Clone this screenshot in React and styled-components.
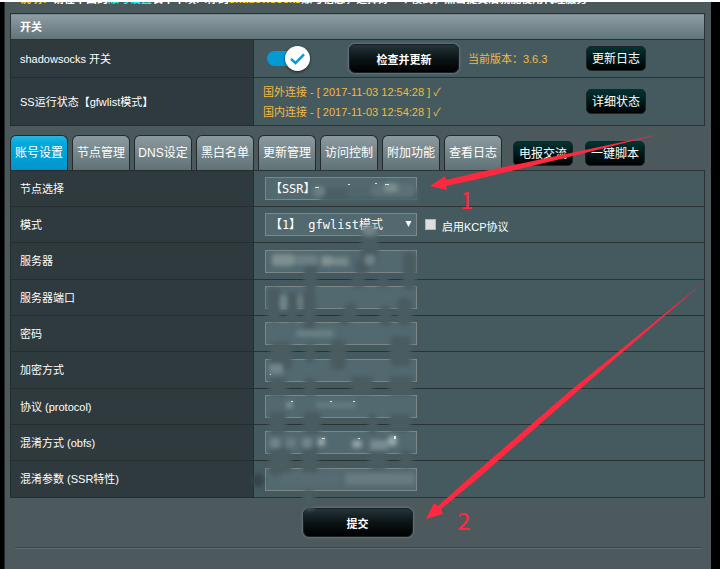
import React, { useState } from "react";
import styled, { createGlobalStyle, css } from "styled-components";

const GlobalStyle = createGlobalStyle`
  * { box-sizing: border-box; }
  html { height: 100%; }
  body, #root { height: 100%; }
  body {
    margin: 0;
    background: #000;
    color: #fff;
    font-family: "Liberation Sans", "Noto Sans CJK SC", sans-serif;
    font-size: 11px;
    line-height: 20px;
  }
  button, input, select { font: inherit; color: inherit; margin: 0; }
`;

const Page = styled.div`
  position: relative;
  min-height: 100%;
  display: flex;
  border-top: 2px solid #fff;
  background: #000;
  padding: 0 9px 0 4px;
`;

const Panel = styled.main`
  flex: 1;
  min-width: 0;
  background: linear-gradient(#4b595c, #4d595d);
  border-left: 1px solid #23292b;
  padding: 0 6px 0 5px;
`;

const Intro = styled.p`
  display: flex;
  align-items: flex-end;
  height: 2px;
  margin: 0 0 9px;
  padding-left: 10px;
  overflow: hidden;
  white-space: nowrap;
  line-height: 9px;
  font-weight: 700;
`;

const Accent = styled.span`
  color: ${(p) => p.$color};
`;

const Table = styled.table`
  width: 100%;
  table-layout: fixed;
  border-collapse: collapse;
  border: 1px solid #2b3234;
`;

const LabelCol = styled.col`
  width: 35%;
`;

const Head = styled.th`
  height: 26px;
  padding: 0 9px;
  text-align: left;
  font-weight: 700;
  background: linear-gradient(#8f9ea3, #5f7378);
  border: 1px solid #2b3234;
`;

const Row = styled.tr`
  height: ${(p) => p.$height || 36}px;
  ${(p) => !p.$height && css`
    &:nth-child(3n) { height: 37px; }
  `}
`;

const Name = styled.th`
  padding: 0 9px;
  text-align: left;
  font-weight: 400;
  background: #2f3a3e;
  border: 1px solid #272d2f;
`;

const Value = styled.td`
  padding: 0 9px;
  background: #445a5f;
  border: 1px solid #2b3234;
`;

const Line = styled.div`
  display: flex;
  align-items: center;
  padding-right: 49px;
`;

const Field = styled.div`
  display: flex;
  align-items: center;
  padding-left: 2px;
`;

const Push = styled.div`
  margin-left: auto;
  display: flex;
`;

const Version = styled.span`
  margin-left: 9px;
  white-space: nowrap;
  color: #f4b93f;
`;

const StatusList = styled.div`
  color: #f4b93f;
`;

const Switch = styled.label`
  position: relative;
  width: 42px;
  height: 25px;
  margin: 0 40px 0 4px;
  display: flex;
  align-items: center;
  input { position: absolute; opacity: 0; inset: 0; }
`;

const Track = styled.span`
  width: 36px;
  height: 15px;
  border-radius: 8px;
  background: ${(p) => (p.$on ? "#039bd3" : "#777")};
`;

const Thumb = styled.span`
  position: absolute;
  top: 0;
  left: ${(p) => (p.$on ? 18 : 0)}px;
  width: 25px;
  height: 25px;
  border-radius: 50%;
  background: #fff;
  box-shadow: 0 1px 3px rgba(0, 0, 0, 0.6);
  display: grid;
  place-items: center;
`;

const MainButton = styled.button`
  width: 110px;
  height: 29px;
  padding: 2px 0 0;
  border: 1px solid #182023;
  border-radius: 6px;
  background: linear-gradient(#233539, #0c1416 50%, #000);
  box-shadow: 0 0 2px 1px #65757a;
  font-weight: 700;
`;

const Pill = styled.button`
  width: 60px;
  height: 25px;
  padding: 0;
  border: 1px solid #1b2526;
  border-radius: 5px;
  background: linear-gradient(#003333, #000);
  font-size: 12px;
`;

const Tabs = styled.nav`
  display: flex;
  align-items: flex-end;
  gap: 4px;
  margin-top: 9px;
  height: 35px;
`;

const Tab = styled.button`
  width: 58px;
  height: 35px;
  padding: 0;
  white-space: nowrap;
  border: 1px solid #222a2c;
  border-bottom: 0;
  border-radius: 6px 6px 0 0;
  background: ${(p) =>
    p.$active
      ? "linear-gradient(#2fb4dc, #00abdc 20%, #0094cc)"
      : "linear-gradient(#8b9a9f, #5f7276)"};
  font-size: 12px;
`;

const TabActions = styled.div`
  display: flex;
  gap: 12px;
  margin-left: 7px;
  height: 29px;
`;

const boxStyle = css`
  width: 152px;
  height: 23px;
  padding: 0 4px;
  border: 1px solid #7d8788;
  border-radius: 0;
  background: #526970;
  font-family: "DejaVu Sans Mono", "Noto Sans CJK SC", monospace;
  font-size: 12px;
  outline: none;
`;

const TextBox = styled.input`${boxStyle}`;
const Choice = styled.select`
  ${boxStyle}
  appearance: none;
`;

const ChoiceWrap = styled.span`
  position: relative;
  display: flex;
`;

const Caret = styled.svg`
  position: absolute;
  right: 5px;
  top: 8px;
  pointer-events: none;
`;

const CheckLabel = styled.label`
  display: flex;
  align-items: center;
  gap: 6px;
  margin-left: 8px;
  padding-top: 4px;
`;

const CheckBox = styled.input`
  appearance: none;
  width: 11px;
  height: 11px;
  margin-bottom: 4px;
  border: 1px solid #b5b5b5;
  background: #dedede;
  &:checked { background: #039bd3; }
`;

const Submit = styled.div`
  display: flex;
  justify-content: center;
  margin-top: 10px;
`;

const Divider = styled.hr`
  margin: 10px 3px 0 5px;
  border: 0;
  border-top: 1px solid #39464a;
  border-bottom: 1px solid #5c6d72;
`;

const Overlay = styled.svg`
  position: absolute;
  left: 0;
  top: -2px;
  pointer-events: none;
`;

const fields = [
  { id: "server", label: "服务器", kind: "text" },
  { id: "port", label: "服务器端口", kind: "text" },
  { id: "password", label: "密码", kind: "password" },
  { id: "method", label: "加密方式", kind: "select" },
  { id: "protocol", label: "协议 (protocol)", kind: "select" },
  { id: "obfs", label: "混淆方式 (obfs)", kind: "select" },
  { id: "param", label: "混淆参数 (SSR特性)", kind: "text" },
];

const tabs = ["账号设置", "节点管理", "DNS设定", "黑白名单", "更新管理", "访问控制", "附加功能", "查看日志"];

// x, y, width, height of each redaction stroke
const darkStrokes = [
  [361, 232, 17, 34], [304, 262, 13, 28], [355, 260, 14, 14], [403, 252, 13, 38],
  [351, 276, 14, 12], [377, 276, 12, 12], [267, 288, 14, 34], [286, 292, 12, 30],
  [303, 290, 13, 34], [344, 303, 13, 18], [379, 306, 13, 20], [397, 298, 15, 28],
  [304, 314, 11, 24], [339, 314, 10, 12], [270, 342, 22, 28], [305, 343, 10, 20],
  [330, 340, 16, 30], [390, 336, 21, 30], [269, 378, 18, 18], [304, 378, 13, 18],
  [351, 376, 22, 18], [389, 376, 24, 20], [269, 412, 17, 22], [303, 412, 18, 22],
  [368, 414, 9, 20], [389, 414, 22, 18], [269, 448, 22, 28], [302, 446, 16, 28],
  [369, 450, 18, 20], [400, 450, 12, 18], [303, 490, 12, 20],
];
// x, y, width, height, colour of the smeared text inside the boxes
const lightStrokes = [
  [272, 254, 22, 12, "#7e908e"], [294, 255, 24, 10, "#6a8083"], [321, 256, 12, 10, "#829092"],
  [333, 257, 16, 9, "#748889"], [365, 255, 10, 10, "#6d8286"],
  [280, 295, 7, 15, "#71878a"], [298, 295, 4, 14, "#6e8286"], [296, 330, 38, 7, "#698084"],
  [269, 364, 14, 10, "#71868a"], [286, 402, 7, 6, "#82959a"], [316, 402, 40, 6, "#647b80"],
  [270, 438, 10, 10, "#71868a"], [286, 438, 10, 10, "#677d82"], [302, 438, 10, 10, "#71868a"],
  [318, 438, 7, 8, "#9ba9aa"], [352, 440, 10, 8, "#92a1a4"], [370, 440, 18, 10, "#788c90"],
  [388, 436, 9, 10, "#91a7a9"], [280, 473, 60, 12, "#566c72"], [345, 473, 70, 12, "#667a80"],
];
const flecks = [
  [315, 187, 4, 1], [348, 184, 2, 1], [375, 183, 2, 1], [385, 184, 4, 1], [291, 401, 2, 1],
  [330, 401, 2, 1], [353, 401, 2, 1], [322, 438, 3, 1], [358, 438, 2, 1], [394, 436, 2, 3],
  [270, 374, 1, 1],
];

function Annotations() {
  return (
    <Overlay width="720" height="569" viewBox="0 0 720 569" aria-hidden="true">
      <defs>
        <filter id="soft" filterUnits="userSpaceOnUse" x="240" y="170" width="200" height="350">
          <feGaussianBlur stdDeviation="2" />
        </filter>
      </defs>
      <g filter="url(#soft)">
        <rect x="318" y="188" width="102" height="14" rx="7" fill="#485e64" />
        <rect x="313" y="186" width="12" height="11" rx="5" fill="#6a8084" />
        <rect x="345" y="187" width="26" height="11" rx="5" fill="#50666b" />
        <rect x="370" y="184" width="46" height="13" rx="6" fill="#5b7277" />
        <rect x="384" y="183" width="14" height="9" rx="4" fill="#7a8d91" />
        <rect x="252" y="474" width="12" height="13" rx="6" fill="#354448" />
        {darkStrokes.map(([x, y, w, h]) => (
          <rect key={`${x}-${y}`} x={x} y={y} width={w} height={h} rx="5" fill="#485c61" />
        ))}
        <rect x="362" y="225" width="15" height="11" rx="6" fill="#6e8286" />
        {lightStrokes.map(([x, y, w, h, fill]) => (
          <rect key={`${x}-${y}`} x={x} y={y} width={w} height={h} rx="3" fill={fill} />
        ))}
      </g>
      {flecks.map(([x, y, w, h]) => (
        <rect key={`${x}-${y}`} x={x} y={y} width={w} height={h} fill="#dcebea" />
      ))}
      <g fill="#ff293f">
        <path d="M430 186 L445 176 L446 180 L480 172 L573 152.500 L660 134 L573 156 L480 178.500 L446 186 L447 190 Z" />
        <path d="M426 519 L434 503 L438 506 L467 480 L570 391 L705 281 L572 396 L476 480 L441 509 L443 514 Z" />
        <g fontFamily="'Noto Sans CJK SC', sans-serif" fontSize="24">
          <text x="460" y="209">1</text>
          <text x="457" y="530">2</text>
        </g>
      </g>
    </Overlay>
  );
}

export default function App() {
  const [on, setOn] = useState(true);
  const [tab, setTab] = useState(0);
  return (
    <>
      <GlobalStyle />
      <Page>
        <Panel>
          <Intro>
            <Accent $color="#fc0">说明：</Accent>请在下面的
            <Accent $color="#0ff">账号设置</Accent>表单中填入你的
            <Accent $color="#fc0">shadowsocks</Accent>
            账号信息，选择好一个模式，点击提交后就能使用代理服务
          </Intro>
          <Table>
            <colgroup><LabelCol /><col /></colgroup>
            <thead>
              <tr><Head colSpan={2}>开关</Head></tr>
            </thead>
            <tbody>
              <Row $height={38}>
                <Name scope="row"><label htmlFor="enable">shadowsocks 开关</label></Name>
                <Value>
                  <Line>
                    <Switch>
                      <input id="enable" type="checkbox" checked={on} onChange={() => setOn(!on)} />
                      <Track $on={on} />
                      <Thumb $on={on}>
                        <svg width="15" height="12" viewBox="0 0 15 12" fill="none" stroke="#039bd3" strokeWidth="2.400">
                          <path d="M1 6 L5.500 10 L14 1.300" />
                        </svg>
                      </Thumb>
                    </Switch>
                    <MainButton type="button">检查并更新</MainButton>
                    <Version>当前版本：3.6.3</Version>
                    <Push><Pill type="button">更新日志</Pill></Push>
                  </Line>
                </Value>
              </Row>
              <Row $height={48}>
                <Name scope="row">SS运行状态【gfwlist模式】</Name>
                <Value>
                  <Line>
                    <StatusList>
                      <div>国外连接 - [ 2017-11-03 12:54:28 ] ✓</div>
                      <div>国内连接 - [ 2017-11-03 12:54:28 ] ✓</div>
                    </StatusList>
                    <Push><Pill type="button">详细状态</Pill></Push>
                  </Line>
                </Value>
              </Row>
            </tbody>
          </Table>

          <Tabs>
            {tabs.map((name, i) => (
              <Tab key={name} type="button" $active={i === tab} onClick={() => setTab(i)}>{name}</Tab>
            ))}
            <TabActions>
              <Pill type="button">电报交流</Pill>
              <Pill type="button">一键脚本</Pill>
            </TabActions>
          </Tabs>

          <Table>
            <colgroup><LabelCol /><col /></colgroup>
            <tbody>
              <Row>
                <Name scope="row"><label htmlFor="node">节点选择</label></Name>
                <Value>
                  <Field><Choice id="node"><option>【SSR】</option></Choice></Field>
                </Value>
              </Row>
              <Row>
                <Name scope="row"><label htmlFor="mode">模式</label></Name>
                <Value>
                  <Field>
                    <ChoiceWrap>
                      <Choice id="mode"><option>【1】 gfwlist模式</option></Choice>
                      <Caret width="7" height="7" viewBox="0 0 7 7"><path d="M0.500 0H6.500L3.500 6Z" fill="#fff" /></Caret>
                    </ChoiceWrap>
                    <CheckLabel><CheckBox type="checkbox" />启用KCP协议</CheckLabel>
                  </Field>
                </Value>
              </Row>
              {fields.map((f) => (
                <Row key={f.id}>
                  <Name scope="row"><label htmlFor={f.id}>{f.label}</label></Name>
                  <Value>
                    <Field>
                      {f.kind === "select" ? <Choice id={f.id} /> : <TextBox id={f.id} type={f.kind} />}
                    </Field>
                  </Value>
                </Row>
              ))}
            </tbody>
          </Table>

          <Submit><MainButton type="submit">提交</MainButton></Submit>
          <Divider />
        </Panel>
        <Annotations />
      </Page>
    </>
  );
}
